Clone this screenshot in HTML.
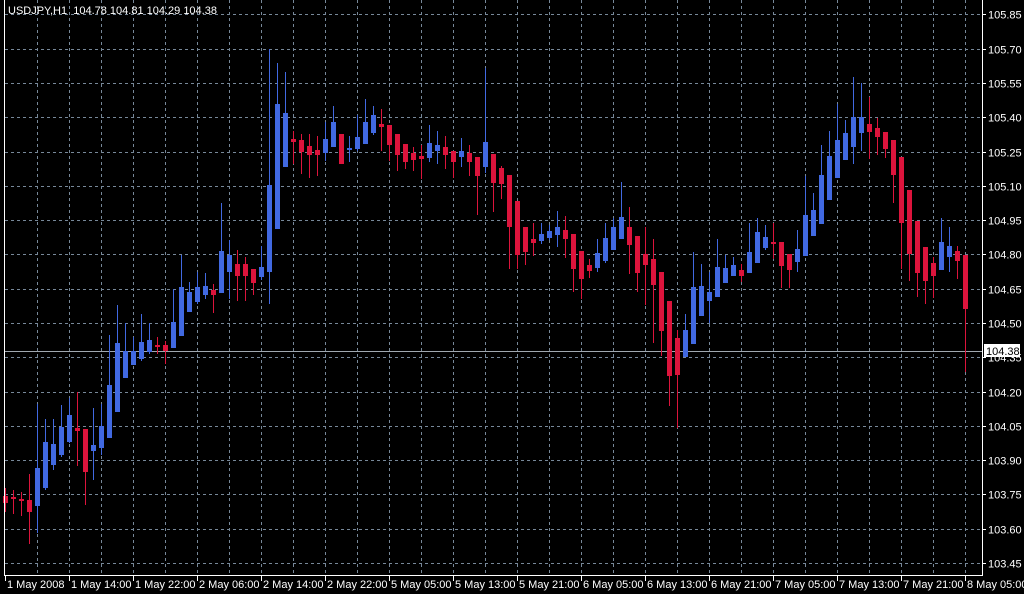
<!DOCTYPE html>
<html><head><meta charset="utf-8"><style>
html,body{margin:0;padding:0;background:#000;width:1024px;height:594px;overflow:hidden}
svg{display:block}
text{font-family:"Liberation Sans",sans-serif;font-size:11px;fill:#fff;white-space:pre}
</style></head><body>
<svg id="s" width="1024" height="594" xmlns="http://www.w3.org/2000/svg">
<rect width="1024" height="594" fill="#000"/>
<g id="grid" stroke="#778899" stroke-width="1" stroke-dasharray="3,3"></g>
<line x1="5" y1="351.5" x2="982" y2="351.5" stroke="#a0a8b0"/>
<g id="c"></g>
<rect x="4" y="0" width="1" height="576" fill="#fff"/>
<rect x="982" y="0" width="1" height="576" fill="#fff"/>
<rect x="4" y="575" width="979" height="1" fill="#fff"/>
<g id="ax"></g>
<text x="8" y="14" xml:space="preserve">USDJPY,H1  104.78 104.81 104.29 104.38</text>
<rect x="984" y="344" width="36" height="13" fill="#fff"/>
<text x="986" y="355" style="fill:#000">104.38</text>
</svg>
<script>
var NS="http://www.w3.org/2000/svg";
function el(p,t,a,txt){var e=document.createElementNS(NS,t);for(var k in a)e.setAttribute(k,a[k]);if(txt)e.textContent=txt;document.getElementById(p).appendChild(e);}
var prices=["105.85","105.70","105.55","105.40","105.25","105.10","104.95","104.80","104.65","104.50","104.35","104.20","104.05","103.90","103.75","103.60","103.45"];
for(var k=0;k<17;k++){var y=Math.round(14.4+34.29*k)+0.5;
 el("grid","line",{x1:5,y1:y,x2:982,y2:y});
 el("ax","line",{x1:982,y1:y,x2:986,y2:y,stroke:"#fff"});
 el("ax","text",{x:988,y:y+4},prices[k]);}
var labs=["1 May 2008","1 May 14:00","1 May 22:00","2 May 06:00","2 May 14:00","2 May 22:00","5 May 05:00","5 May 13:00","5 May 21:00","6 May 05:00","6 May 13:00","6 May 21:00","7 May 05:00","7 May 13:00","7 May 21:00","8 May 05:00"];
for(var k=1;k<=30;k++){var x=5+32*k+0.5;el("grid","line",{x1:x,y1:0,x2:x,y2:575});}
for(var k=0;k<16;k++){var x=5+64*k;el("ax","line",{x1:x+0.5,y1:575,x2:x+0.5,y2:581,stroke:"#fff"});el("ax","text",{x:x+2,y:588},labs[k]);}
var d=[[496,503,488,512,'r'],[497,499,490,514,'r'],[499,501,492,516,'r'],[500,512,474,544,'r'],[468,506,404,533,'b'],[442,488,419,490,'b'],[444,465,419,470,'b'],[427,455,405,457,'b'],[415,442,398,443,'b'],[428,431,392,466,'r'],[429,472,429,505,'r'],[445,451,408,480,'b'],[426,448,404,455,'b'],[385,438,335,438,'b'],[343,412,305,412,'b'],[351,378,323,378,'b'],[351,365,337,365,'b'],[342,359,314,361,'b'],[340,352,323,354,'b'],[345,347,337,354,'r'],[345,351,341,364,'r'],[322,348,289,348,'b'],[287,336,255,336,'b'],[292,312,282,312,'b'],[287,302,272,304,'b'],[286,295,273,299,'b'],[290,295,284,313,'r'],[251,293,203,293,'b'],[255,272,240,299,'b'],[264,276,250,301,'r'],[264,276,257,301,'r'],[269,283,269,295,'r'],[267,277,246,280,'b'],[185,272,49,304,'b'],[104,229,63,229,'b'],[113,167,72,167,'b'],[139,142,131,164,'r'],[140,152,134,174,'r'],[146,155,134,178,'r'],[150,155,136,176,'r'],[139,153,122,161,'b'],[122,147,106,147,'b'],[134,164,134,164,'r'],[148,150,136,162,'b'],[137,149,115,151,'b'],[122,144,99,144,'b'],[115,133,106,135,'b'],[124,127,109,151,'r'],[125,145,125,161,'r'],[134,155,134,171,'r'],[144,162,144,169,'r'],[153,160,147,171,'r'],[156,159,145,179,'r'],[143,158,125,162,'b'],[145,151,131,164,'b'],[147,155,136,169,'r'],[151,162,151,178,'r'],[151,157,138,167,'b'],[153,162,145,176,'r'],[157,176,157,215,'r'],[142,167,68,173,'b'],[154,183,154,212,'r'],[168,184,166,199,'r'],[175,227,175,269,'r'],[201,255,201,269,'r'],[227,252,227,265,'r'],[239,243,223,256,'r'],[234,241,223,244,'b'],[231,238,225,240,'b'],[227,235,211,247,'b'],[230,239,216,258,'r'],[234,269,234,292,'r'],[251,279,251,299,'r'],[265,271,259,278,'r'],[253,268,239,272,'b'],[238,261,223,263,'b'],[227,250,218,250,'b'],[217,239,182,239,'b'],[227,245,207,274,'r'],[236,273,236,292,'r'],[254,265,227,305,'r'],[259,285,239,343,'r'],[272,331,272,356,'r'],[301,376,301,406,'r'],[338,375,330,428,'r'],[330,357,314,357,'b'],[287,344,252,344,'b'],[286,316,264,316,'b'],[292,301,272,323,'b'],[267,297,239,297,'b'],[268,283,255,283,'b'],[265,276,257,276,'b'],[270,276,264,282,'r'],[252,273,223,273,'b'],[232,263,218,263,'b'],[237,248,225,250,'b'],[242,244,223,259,'r'],[242,266,242,288,'r'],[254,270,254,288,'r'],[249,262,230,272,'b'],[215,256,176,256,'b'],[210,236,193,236,'b'],[175,224,145,224,'b'],[156,200,131,200,'b'],[140,178,104,178,'b'],[133,160,120,160,'b'],[117,147,77,164,'b'],[117,133,83,151,'b'],[124,132,97,159,'r'],[128,137,118,155,'r'],[132,149,132,158,'r'],[140,175,140,203,'r'],[157,223,157,269,'r'],[190,254,190,281,'r'],[221,273,221,297,'r'],[247,281,247,304,'r'],[263,276,257,298,'r'],[242,270,218,270,'b'],[246,257,227,272,'b'],[251,261,246,279,'r'],[255,309,255,372,'r']];
for(var i=0;i<d.length;i++){var c=5+8*i,a=d[i],col=a[4]=='b'?'#4169e1':'#dc143c';
 el("c","rect",{x:c,y:a[2],width:1,height:Math.max(1,a[3]-a[2]),fill:col});
 el("c","rect",{x:c-2,y:a[0],width:5,height:Math.max(2,a[1]-a[0]),fill:col});}
</script>
</body></html>
